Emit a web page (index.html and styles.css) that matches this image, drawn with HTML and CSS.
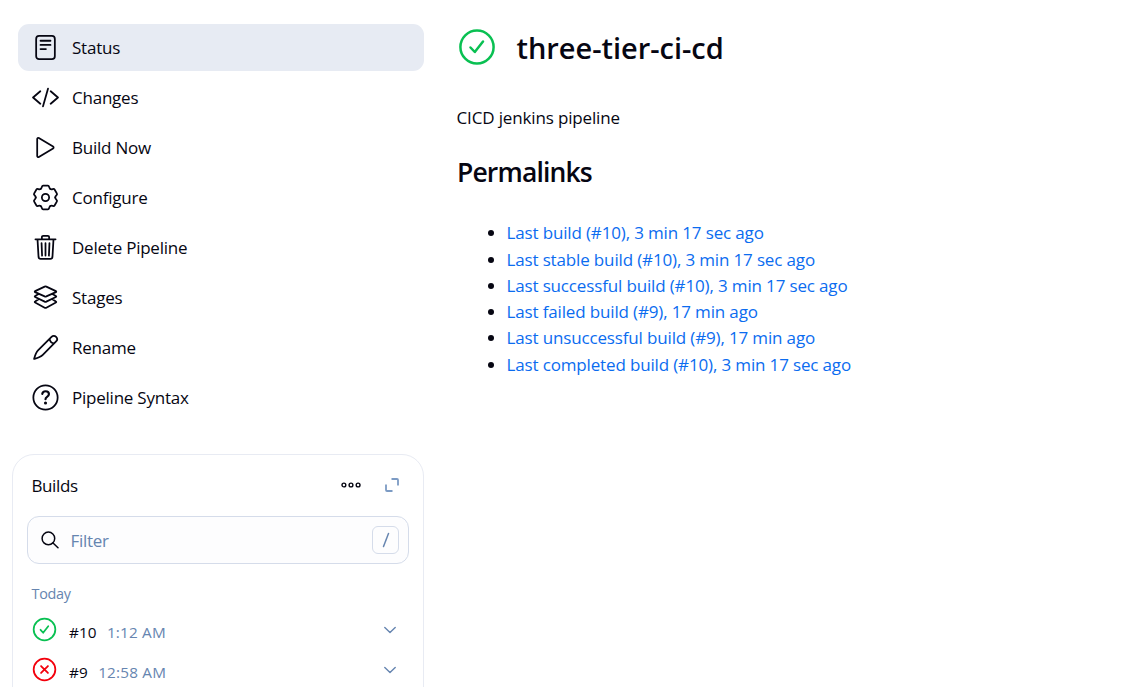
FILE: index.html
```html
<!DOCTYPE html>
<html lang="en">
<head>
<meta charset="utf-8">
<title>three-tier-ci-cd</title>
<link rel="stylesheet" href="styles.css">
</head>
<body>
<div class="page">
  <aside class="sidebar">
    <nav class="tasks">
      <a class="task active"><svg class="icon" viewBox="0 0 26 26"><rect x="4" y="1.900" width="18" height="22.400" rx="2.8"/><path d="M8.2 6.5h9.6M8.2 10.5h9.6M8.2 14.5h5.2"/></svg><span>Status</span></a>
      <a class="task"><svg class="icon" viewBox="0 0 26 26"><path d="M8 7L1 13l7 6M18 7l7 6-7 6M15.400 4.500l-4.800 17"/></svg><span>Changes</span></a>
      <a class="task"><svg class="icon" viewBox="0 0 26 26"><path d="M5 4.7v16.6c0 .9.8 1.3 1.6.8l13.7-8.2c.7-.4.7-1.4 0-1.8L6.600 3.900c-.8-.5-1.600-.1-1.600.8z"/></svg><span>Build Now</span></a>
      <a class="task"><svg class="icon" viewBox="-13 -13 26 26"><defs><path id="tooth" d="M-4.700-8.140C-3.100-9.060-3.900-11.400-2.300-11.400H2.300C3.900-11.400 3.100-9.060 4.700-8.140"/></defs><use href="#tooth"/><use href="#tooth" transform="rotate(60)"/><use href="#tooth" transform="rotate(120)"/><use href="#tooth" transform="rotate(180)"/><use href="#tooth" transform="rotate(240)"/><use href="#tooth" transform="rotate(300)"/><circle r="3.500"/></svg><span>Configure</span></a>
      <a class="task"><svg class="icon" viewBox="0 0 26 26"><path d="M3.300 5.100h19.400M5.300 5.100l1 17c.1 1.100.9 1.900 2 1.900h9.400c1.100 0 1.900-.8 2-1.900l1-17M9.500 5.100V3c0-.8.6-1.300 1.300-1.300h4.400c.7 0 1.300.5 1.300 1.300v2.100M13 8.800v12M9.200 8.800l.5 12M16.800 8.800l-.5 12"/></svg><span>Delete Pipeline</span></a>
      <a class="task"><svg class="icon" viewBox="0 0 26 26"><path d="M12.200 2.500L3 6.900c-.5.200-.5.700 0 .9l9.200 4.100c.5.200 1.100.2 1.600 0L23 7.800c.5-.2.5-.7 0-.9l-9.200-4.400c-.5-.2-1.100-.2-1.600 0zM6.400 9.700L3 11.600c-.5.200-.5.700 0 .9l9.200 4.500c.5.300 1.100.3 1.600 0l9.200-4.500c.5-.2.5-.7 0-.9l-3.400-1.900M6.400 14.700L3 16.900c-.5.200-.5.700 0 .9l9.200 5c.5.300 1.100.3 1.600 0l9.200-5c.5-.2.5-.7 0-.9l-3.400-2.200"/></svg><span>Stages</span></a>
      <a class="task"><svg class="icon" viewBox="0 0 26 26"><path d="M18.800 2.800L6 15.600C3.600 18 2.900 20.800 2 24c3.200-.9 6-1.600 8.400-4L23.200 7.200c1.300-1.300 1.300-3.100 0-4.400s-3.100-1.300-4.400 0zM17 4.600c.3 2.500 1.900 4.100 4.400 4.400"/></svg><span>Rename</span></a>
      <a class="task"><svg class="icon" viewBox="0 0 26 26"><circle cx="13" cy="13" r="11.700"/><path class="bold" d="M9.900 9.500c.2-1.500 1.500-2.500 3.200-2.500 1.800 0 3.200 1 3.200 2.700 0 1.400-.8 2.100-1.800 2.700-1 .6-1.500 1.100-1.500 2.300"/><circle class="dot" cx="13" cy="18.300" r="1.500"/></svg><span>Pipeline Syntax</span></a>
    </nav>
    <section class="builds">
      <header class="builds-head">
        <h2 class="builds-title">Builds</h2>
        <svg class="more" viewBox="0 0 20 8"><circle cx="2.900" cy="4" r="1.900"/><circle cx="10" cy="4" r="1.900"/><circle cx="17.100" cy="4" r="1.900"/></svg>
        <svg class="expand" viewBox="0 0 14 14"><path d="M6.500 1H12q1 0 1 1v5.500M1 6.500V12q0 1 1 1h5.500"/></svg>
      </header>
      <div class="filter">
        <svg class="search" viewBox="0 0 18 18"><circle cx="7.400" cy="7.400" r="6.300"/><path d="M12 12l5 4.800"/></svg>
        <span class="placeholder">Filter</span>
        <kbd class="key"><svg viewBox="0 0 8 16"><path d="M6.500 1.500l-5 13"/></svg></kbd>
      </div>
      <p class="day">Today</p>
      <div class="build">
        <svg class="state ok" viewBox="0 0 24 24"><circle cx="12" cy="12" r="10.400"/><path d="M8.200 12.300l2.500 2.800 4.900-6.200"/></svg>
        <span class="number">#10</span><span class="time">1:12 AM</span>
        <svg class="chevron" viewBox="0 0 12 8"><path d="M.8 1.500L6 6.500l5.200-5"/></svg>
      </div>
      <div class="build">
        <svg class="state fail" viewBox="0 0 24 24"><circle cx="12" cy="12" r="10.400"/><path d="M8.700 8.700l6.600 6.600M15.300 8.700l-6.600 6.600"/></svg>
        <span class="number">#9</span><span class="time">12:58 AM</span>
        <svg class="chevron" viewBox="0 0 12 8"><path d="M.8 1.500L6 6.500l5.200-5"/></svg>
      </div>
    </section>
  </aside>
  <main class="main">
    <div class="headline">
      <svg class="headline-state ok" viewBox="0 0 36 36"><circle cx="18" cy="18" r="16.600"/><path d="M11.500 18.500l4.300 4.500 8.200-10.500"/></svg>
      <h1 class="title">three-tier-ci-cd</h1>
    </div>
    <p class="description">CICD jenkins pipeline</p>
    <h2 class="subtitle">Permalinks</h2>
    <ul class="permalinks">
      <li><a>Last build (#10), 3 min 17 sec ago</a></li>
      <li><a>Last stable build (#10), 3 min 17 sec ago</a></li>
      <li><a>Last successful build (#10), 3 min 17 sec ago</a></li>
      <li><a>Last failed build (#9), 17 min ago</a></li>
      <li><a>Last unsuccessful build (#9), 17 min ago</a></li>
      <li><a>Last completed build (#10), 3 min 17 sec ago</a></li>
    </ul>
  </main>
</div>
</body>
</html>
```
FILE: styles.css
```css
* { box-sizing: border-box; }
body {
  margin: 0;
  background: #fff;
  color: #060612;
  font: 17px/26.3px "Open Sans", "Noto Sans", sans-serif;
  letter-spacing: -0.2px;
}
h1, h2, p, ul { margin: 0; }
svg { fill: none; stroke: currentColor; stroke-linecap: round; stroke-linejoin: round; flex: none; }
.page { display: flex; height: 687px; overflow: hidden; }
.sidebar { width: 424px; flex: none; padding: 24px 0 0 12px; }
.tasks { display: flex; flex-direction: column; gap: 3px; padding-left: 6px; }
.task { display: flex; align-items: center; gap: 13px; height: 47px; padding-left: 14px; border-radius: 11px; }
.task span { padding-top: 2px; letter-spacing: -0.23px; }
.task.active { background: #e7ebf3; }
.icon { width: 27px; height: 27px; stroke-width: 1.7; }
.icon .bold { stroke-width: 2.1; }
.icon .dot { fill: currentColor; stroke: none; }
.builds { height: 260px; margin-top: 33px; padding: 0 14px; border: 1px solid #e8ebf3; border-radius: 22px; }
.builds-head { display: flex; align-items: center; height: 61px; padding: 0 10px 0 4.5px; }
.builds-title { font-size: 17px; font-weight: 400; margin-right: auto; padding-top: 1px; letter-spacing: -0.4px; }
.more { width: 20px; height: 8px; stroke-width: 1.4; margin: -2px 24px 0 0; }
.expand { width: 14px; height: 14px; margin-top: -2px; stroke-width: 1.8; stroke-linecap: butt; color: #7c9bc4; }
.filter { display: flex; align-items: center; height: 48px; padding: 0 9px 0 13px; border: 1px solid #d5dcea; border-radius: 12px; background: #fdfdfe; }
.search { width: 18px; height: 18px; stroke-width: 1.5; }
.placeholder { margin-left: 11.5px; margin-right: auto; padding-top: 2px; letter-spacing: -0.3px; color: #6685b0; }
.key { display: flex; align-items: center; justify-content: center; width: 27px; height: 28px; border: 1px solid #d5dcea; border-radius: 6px; color: #6685b0; }
.key svg { width: 8px; height: 16px; stroke-width: 1.5; }
.day { margin: 17px 0 4px 4.5px; font-size: 14.4px; letter-spacing: -0.3px; color: #6685b0; }
.build { display: flex; align-items: center; height: 40px; padding: 0 13px 0 5px; font-size: 15.3px; letter-spacing: 0; }
.state { width: 25px; height: 25px; stroke-width: 1.7; margin-top: -4px; }
.ok { color: #09c052; }
.fail { color: #f3000c; }
.number { margin-left: 12px; padding-top: 1px; }
.time { margin-left: 10.5px; padding-top: 1px; letter-spacing: 0.2px; color: #6685b0; }
.chevron { width: 12px; height: 8px; margin-left: auto; margin-top: -3px; stroke-width: 1.4; color: #6685b0; }
.main { padding: 29px 0 0 33px; }
.headline { display: flex; align-items: center; gap: 21.5px; height: 36px; padding-left: 2px; }
.headline-state { width: 36px; height: 36px; stroke-width: 2.5; }
.title { padding-top: 2px; font-size: 29px; line-height: 36px; font-weight: 600; letter-spacing: -0.02px; }
.description { margin: 40px 0 0 -0.5px; letter-spacing: -0.15px; }
.subtitle { margin-top: 23px; font-size: 26.5px; line-height: 36px; font-weight: 600; letter-spacing: -0.85px; }
.permalinks { margin-top: 30px; padding-left: 49.5px; letter-spacing: -0.15px; }
.permalinks a { color: #0b6cf0; }
```
